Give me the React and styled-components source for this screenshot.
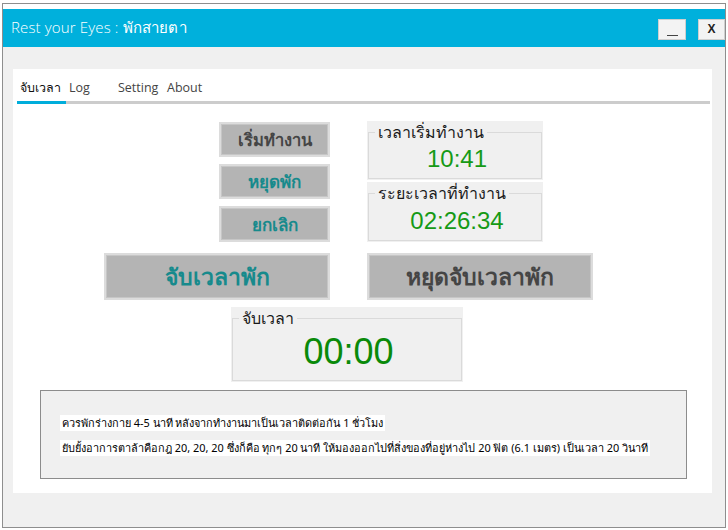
import React from "react";
import styled, { createGlobalStyle } from "styled-components";

const GlobalStyle = createGlobalStyle`
  html, body {
    margin: 0;
    padding: 0;
    background: #fff;
  }
  body {
    font-family: "Noto Sans", "DejaVu Sans", sans-serif;
  }
  * {
    box-sizing: border-box;
  }
`;

const Window = styled.div`
  margin: 3px 0 0 2px;
  width: 724px;
  height: 525px;
  border: 1px solid #8e8e8e;
  background: #fff;
  padding-top: 5px;
  display: flex;
  flex-direction: column;
`;

const TitleBar = styled.div`
  height: 38px;
  background: #00b0dc;
  display: flex;
  align-items: center;
  padding-left: 8px;
`;

const Title = styled.div`
  flex: 1;
  color: #fff;
  font-family: "Open Sans", "Noto Sans", sans-serif;
  font-size: 15px;
  font-weight: 300;
  letter-spacing: 0.15px;
`;

const WinButtons = styled.div`
  display: flex;
  gap: 12px;
  margin-top: 2px;
`;

const WinButton = styled.div`
  width: ${(p) => p.$w || 28}px;
  height: 21px;
  background: #f3f3f3;
  border: 1px solid #cfcfcf;
  display: flex;
  align-items: ${(p) => (p.$low ? "flex-end" : "center")};
  justify-content: center;
  padding-bottom: ${(p) => (p.$low ? "3px" : "0")};
  font-family: "Liberation Sans", Arial, sans-serif;
  font-size: 12px;
  font-weight: bold;
  color: #222;
`;

const UnderBar = styled.div`
  width: 11px;
  height: 1px;
  background: #444;
`;

const Body = styled.div`
  flex: 1;
  background: #f0f0f0;
  padding: 22px 13px 34px 10px;
  display: flex;
`;

const Panel = styled.div`
  flex: 1;
  background: #fff;
  display: flex;
  flex-direction: column;
`;

const TabRow = styled.div`
  display: flex;
  margin: 0 2px 0 4px;
  height: 35px;
  border-bottom: 3px solid #cccccc;
`;

const Tab = styled.div`
  width: 49px;
  padding: 10px 0 0 3px;
  margin-bottom: -3px;
  border-bottom: 3px solid ${(p) => (p.$active ? "#00addb" : "transparent")};
  font-family: "Open Sans", "Noto Sans", sans-serif;
  font-size: 12.5px;
  line-height: 18px;
  color: ${(p) => (p.$active ? "#111" : "#444")};
  white-space: nowrap;
`;

const Content = styled.div`
  padding: 17px 0 0 91px;
`;

const Grid = styled.div`
  display: grid;
  grid-template-columns: 226px 226px;
  column-gap: 37px;
  width: 489px;
`;

const ButtonStack = styled.div`
  display: flex;
  flex-direction: column;
  align-items: flex-end;
  gap: 7px;
  padding-top: 1px;
`;

const Button = styled.div`
  width: ${(p) => p.$w}px;
  height: ${(p) => p.$h}px;
  background: #b4b4b4;
  border: 2px solid #dcdcdc;
  box-shadow: inset 0 0 0 1px #c6c6c6;
  display: flex;
  align-items: center;
  justify-content: center;
  font-family: "Noto Sans", "DejaVu Sans", sans-serif;
  font-weight: bold;
  font-size: ${(p) => p.$size}px;
  color: ${(p) => (p.$teal ? "#178a8c" : "#454545")};
  white-space: nowrap;
`;

const BoxStack = styled.div`
  display: flex;
  flex-direction: column;
  gap: 2px;
`;

const GroupWrap = styled.div`
  width: ${(p) => p.$w}px;
  height: ${(p) => p.$h}px;
  background: #f0f0f0;
  padding: 0 1px 1px 1px;
  display: flex;
  justify-self: ${(p) => (p.$center ? "center" : "start")};
  grid-column: ${(p) => (p.$span ? "1 / -1" : "auto")};
`;

const Frame = styled.fieldset`
  flex: 1;
  margin: 0;
  padding: 0;
  border: 1px solid #dadada;
  display: flex;
  flex-direction: column;
  align-items: center;
  justify-content: center;
  min-width: 0;
`;

const Legend = styled.legend`
  margin-left: 6px;
  padding: 0 3px;
  font-family: "Noto Sans", "DejaVu Sans", sans-serif;
  font-size: 16px;
  line-height: 22px;
  color: #1a1a1a;
`;

const Clock = styled.div`
  font-family: "Liberation Sans", Arial, sans-serif;
  font-size: ${(p) => p.$size}px;
  color: ${(p) => (p.$dark ? "#0a8a0a" : "#169a16")};
  margin-top: ${(p) => p.$shift || 0}px;
  line-height: 1;
  margin-left: 4px;
`;

const BigRow = styled.div`
  grid-column: 1 / -1;
  display: grid;
  grid-template-columns: 226px 226px;
  column-gap: 37px;
  margin-top: 11px;
`;

const StopWrap = styled(GroupWrap)`
  margin-top: 7px;
  margin-left: -4px;
`;

const InfoBox = styled.div`
  margin: 8px 25px 0 27px;
  height: 89px;
  background: #f0f0f0;
  border: 1px solid #8c8c8c;
  padding: 24px 0 0 19px;
  display: flex;
  flex-direction: column;
  align-items: flex-start;
  gap: 9px;
`;

const InfoLine = styled.div`
  background: #fff;
  height: 16px;
  padding: 0 2px;
  font-family: "Noto Sans", "DejaVu Sans", sans-serif;
  font-size: 10.9px;
  line-height: 16px;
  color: #000;
  white-space: nowrap;
`;

const tabs = ["จับเวลา", "Log", "", "Setting", "About"];

export default function App() {
  return (
    <>
      <GlobalStyle />
      <Window>
        <TitleBar>
          <Title>Rest your Eyes : พักสายตา</Title>
          <WinButtons>
            <WinButton $low>
              <UnderBar />
            </WinButton>
            <WinButton $w={27}>X</WinButton>
          </WinButtons>
        </TitleBar>
        <Body>
          <Panel>
            <TabRow>
              {tabs.map((t, i) =>
                t ? (
                  <Tab key={i} $active={i === 0}>
                    {t}
                  </Tab>
                ) : null
              )}
            </TabRow>
            <Content>
              <Grid>
                <ButtonStack>
                  <Button $w={111} $h={35} $size={16.5}>เริ่มทำงาน</Button>
                  <Button $w={111} $h={35} $size={17} $teal>หยุดพัก</Button>
                  <Button $w={111} $h={36} $size={17} $teal>ยกเลิก</Button>
                </ButtonStack>
                <BoxStack>
                  <GroupWrap $w={176} $h={59}>
                    <Frame>
                      <Legend>เวลาเริ่มทำงาน</Legend>
                      <Clock $size={24} $shift={-3}>10:41</Clock>
                    </Frame>
                  </GroupWrap>
                  <GroupWrap $w={176} $h={60}>
                    <Frame>
                      <Legend>ระยะเวลาที่ทำงาน</Legend>
                      <Clock $size={24} $shift={-3}>02:26:34</Clock>
                    </Frame>
                  </GroupWrap>
                </BoxStack>
                <BigRow>
                  <Button $w={226} $h={47} $size={23} $teal>จับเวลาพัก</Button>
                  <Button $w={226} $h={47} $size={23}>หยุดจับเวลาพัก</Button>
                </BigRow>
                <StopWrap $w={232} $h={75} $span $center>
                  <Frame>
                    <Legend>จับเวลา</Legend>
                    <Clock $size={36} $dark $shift={-5}>00:00</Clock>
                  </Frame>
                </StopWrap>
              </Grid>
            </Content>
            <InfoBox>
              <InfoLine>ควรพักร่างกาย 4-5 นาที หลังจากทำงานมาเป็นเวลาติดต่อกัน 1 ชั่วโมง</InfoLine>
              <InfoLine>ยับยั้งอาการตาล้าคือกฎ 20, 20, 20 ซึ่งก็คือ ทุกๆ 20 นาที ให้มองออกไปที่สิ่งของที่อยู่ห่างไป 20 ฟิต (6.1 เมตร) เป็นเวลา 20 วินาที</InfoLine>
            </InfoBox>
          </Panel>
        </Body>
      </Window>
    </>
  );
}
